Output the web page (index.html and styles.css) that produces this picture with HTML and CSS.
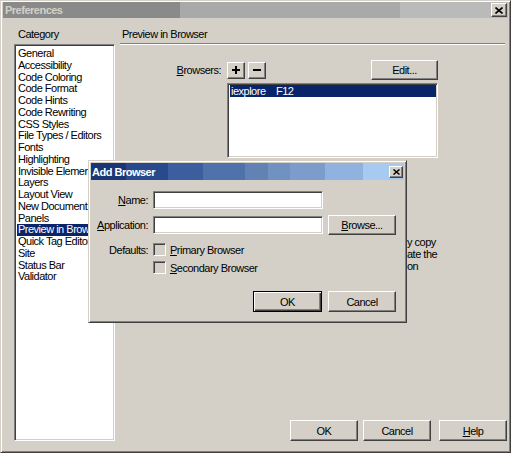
FILE: index.html
```html
<!DOCTYPE html>
<html>
<head>
<meta charset="utf-8">
<title>Preferences</title>
<link rel="stylesheet" href="styles.css">
</head>
<body>
<div class="window">
  <div class="titlebar">
    <span class="title">Preferences</span>
    <span class="tclose"><svg width="8" height="7" viewBox="0 0 8 7"><path d="M0.5 0.5L7.5 6.5M7.5 0.5L0.5 6.5" stroke="#000" stroke-width="1.6" fill="none"/></svg></span>
  </div>
  <div class="body">
    <div class="leftcol">
      <div class="caption">Category</div>
      <ul class="catlist">
        <li>General</li>
        <li>Accessibility</li>
        <li>Code Coloring</li>
        <li>Code Format</li>
        <li>Code Hints</li>
        <li>Code Rewriting</li>
        <li>CSS Styles</li>
        <li>File Types / Editors</li>
        <li>Fonts</li>
        <li>Highlighting</li>
        <li>Invisible Elements</li>
        <li>Layers</li>
        <li>Layout View</li>
        <li>New Document</li>
        <li>Panels</li>
        <li class="sel">Preview in Browser</li>
        <li>Quick Tag Editor</li>
        <li>Site</li>
        <li>Status Bar</li>
        <li>Validator</li>
      </ul>
    </div>
    <div class="rightcol">
      <div class="caption panelhead">Preview in Browser</div>
      <div class="browsers">
        <div class="blabel"><u>B</u>rowsers:</div>
        <div class="bctrl">
          <button class="btn sq"><svg width="8" height="8" viewBox="0 0 8 8"><path d="M4 0V8M0 4H8" stroke="#000" stroke-width="2"/></svg></button>
          <button class="btn sq"><svg width="8" height="8" viewBox="0 0 8 8"><path d="M0 4H8" stroke="#000" stroke-width="2"/></svg></button>
          <button class="btn edit">Edit...</button>
        </div>
        <div></div>
        <div class="blist">
          <div class="brow sel"><span class="bname">iexplore</span><span>F12</span></div>
        </div>
      </div>
      <div class="note">y copy<br>ate the<br>on</div>
      <div class="footer">
        <button class="btn fbtn">OK</button>
        <button class="btn fbtn">Cancel</button>
        <button class="btn fbtn help"><u>H</u>elp</button>
      </div>
    </div>
  </div>

  <div class="dialog">
    <div class="dtitle">
      <span class="title">Add Browser</span>
      <span class="dclose"><svg width="7" height="6" viewBox="0 0 7 6"><path d="M0.5 0.5L6.5 5.5M6.5 0.5L0.5 5.5" stroke="#000" stroke-width="1.5" fill="none"/></svg></span>
    </div>
    <div class="dbody">
      <div class="drow r1">
        <span class="dlabel"><u>N</u>ame:</span>
        <span class="field"></span>
      </div>
      <div class="drow r2">
        <span class="dlabel"><u>A</u>pplication:</span>
        <span class="field"></span>
        <button class="btn dbtn"><u>B</u>rowse...</button>
      </div>
      <div class="drow r3">
        <span class="dlabel">Defaults:</span>
        <span class="check"></span>
        <span class="ctext"><u>P</u>rimary Browser</span>
      </div>
      <div class="drow r4">
        <span class="dlabel"></span>
        <span class="check"></span>
        <span class="ctext"><u>S</u>econdary Browser</span>
      </div>
      <div class="dbuttons">
        <button class="btn dbtn def">OK</button>
        <button class="btn dbtn">Cancel</button>
      </div>
    </div>
  </div>
</div>
</body>
</html>
```

FILE: styles.css
```css
html, body {
  margin: 0;
  padding: 0;
  background: #d4d0c8;
}
body {
  font-family: "Liberation Sans", Arial, sans-serif;
  font-size: 11px;
  letter-spacing: -0.5px;
  color: #000;
}
* { box-sizing: border-box; }

.window {
  position: relative;
  width: 511px;
  height: 453px;
  border: 1px solid;
  border-color: #d4d0c8 #404040 #404040 #d4d0c8;
  box-shadow: inset 1px 1px #ffffff, inset -1px -1px #808080;
  padding: 1px 2px 1px 2px;
  display: flex;
  flex-direction: column;
  overflow: hidden;
}

.titlebar {
  height: 16px;
  display: flex;
  align-items: center;
  justify-content: space-between;
  background: linear-gradient(to right, #8a8a8a 0, #8a8a8a 177px, #a9a9a9 177px, #a9a9a9 397px, #bababa 397px);
}
.titlebar .title {
  color: #d4d0c8;
  font-weight: bold;
  padding-left: 2px;
  line-height: 16px;
}
.tclose, .dclose {
  display: flex;
  align-items: center;
  justify-content: center;
  background: #d4d0c8;
  border: 1px solid;
  border-color: #ffffff #404040 #404040 #ffffff;
  box-shadow: inset -1px -1px #808080;
}
.tclose {
  width: 16px;
  height: 14px;
  margin-right: 1px;
}

.body {
  display: flex;
  height: 433px;
  padding: 10px 1px 10px 11px;
  gap: 5px;
}

.caption {
  height: 12px;
  line-height: 12px;
  white-space: nowrap;
}

.leftcol {
  width: 101px;
  display: flex;
  flex-direction: column;
}
.leftcol .caption {
  padding-left: 4px;
  margin-bottom: 4px;
}
.catlist {
  list-style: none;
  margin: 0;
  padding: 3px 0 0 1px;
  flex: 1;
  background: #ffffff;
  border: 1px solid;
  border-color: #808080 #ffffff #ffffff #808080;
  box-shadow: inset 1px 1px #404040, inset -1px -1px #d4d0c8;
  overflow: hidden;
}
.catlist li {
  height: 11.75px;
  line-height: 11.75px;
  white-space: nowrap;
  padding-left: 1px;
  margin-left: 1px;
}
.catlist li.sel {
  background: #0a246a;
  color: #ffffff;
}

.rightcol {
  flex: 1;
  display: flex;
  flex-direction: column;
}
.panelhead {
  height: 17px;
  padding-left: 2px;
  margin-right: 2px;
  border-bottom: 1px solid #ffffff;
  box-shadow: inset 0 -1px #808080;
}

.browsers {
  margin-top: 15px;
  display: grid;
  grid-template-columns: 107px 211px;
  grid-template-rows: 20px 75px;
  row-gap: 3px;
}
.blabel {
  text-align: right;
  padding-right: 6px;
  line-height: 20px;
}
.bctrl {
  display: flex;
  align-items: center;
  gap: 3px;
}

.btn {
  font: inherit;
  letter-spacing: inherit;
  color: #000;
  background: #d4d0c8;
  border: 1px solid;
  border-color: #ffffff #404040 #404040 #ffffff;
  box-shadow: inset -1px -1px #808080;
  padding: 0;
  margin: 0;
  display: flex;
  align-items: center;
  justify-content: center;
}
.sq {
  width: 18px;
  height: 17px;
}
.edit {
  width: 67px;
  height: 20px;
  margin-left: auto;
}

.blist {
  background: #ffffff;
  border: 1px solid;
  border-color: #808080 #ffffff #ffffff #808080;
  box-shadow: inset 1px 1px #404040, inset -1px -1px #d4d0c8;
  padding: 1px 1px 0 2px;
}
.brow {
  height: 12px;
  line-height: 12px;
  display: flex;
  padding-left: 1px;
}
.brow.sel {
  background: #0a246a;
  color: #ffffff;
}
.bname {
  width: 45px;
}

.note {
  margin-top: 78px;
  margin-left: 287px;
  line-height: 12px;
  white-space: nowrap;
}

.footer {
  margin-top: auto;
  display: flex;
  justify-content: flex-end;
  gap: 5px;
}
.fbtn {
  width: 68px;
  height: 21px;
}
.fbtn.help {
  margin-left: 3px;
}

/* Dialog overlay */
.dialog {
  position: absolute;
  left: 87px;
  top: 159px;
  width: 319px;
  height: 163px;
  background: #d4d0c8;
  border: 1px solid;
  border-color: #d4d0c8 #404040 #404040 #d4d0c8;
  box-shadow: inset 1px 1px #ffffff, inset -1px -1px #808080;
  padding: 2px;
}
.dtitle {
  height: 17px;
  display: flex;
  align-items: center;
  justify-content: space-between;
  background: linear-gradient(to right,
    #1a3673 0, #1a3673 35px,
    #284a8c 35px, #284a8c 77px,
    #3c5e9e 77px, #3c5e9e 112px,
    #5072aa 112px, #5072aa 154px,
    #6282b4 154px, #6282b4 177px,
    #7092c2 177px, #7092c2 199px,
    #7c9ccc 199px, #7c9ccc 234px,
    #90b2de 234px, #90b2de 272px,
    #a6caf0 272px);
}
.dtitle .title {
  color: #ffffff;
  font-weight: bold;
  padding-left: 1px;
}
.dclose {
  width: 14px;
  height: 12px;
  margin-right: 1px;
}

.dbody {
  display: flex;
  flex-direction: column;
}
.drow {
  display: flex;
  align-items: center;
}
.r1 { margin-top: 11px; height: 18px; }
.r2 { margin-top: 6px; height: 20px; }
.r3 { margin-top: 8px; height: 13px; }
.r4 { margin-top: 5px; height: 13px; }
.dlabel {
  width: 57px;
  margin-right: 5px;
  text-align: right;
  white-space: nowrap;
}
.field {
  width: 170px;
  height: 18px;
  background: #ffffff;
  border: 1px solid;
  border-color: #808080 #ffffff #ffffff #808080;
  box-shadow: inset 1px 1px #404040, inset -1px -1px #d4d0c8;
  margin-right: 5px;
}
.dbtn {
  width: 68px;
  height: 20px;
}
.check {
  width: 13px;
  height: 13px;
  background: #d4d0c8;
  border: 1px solid;
  border-color: #808080 #ffffff #ffffff #808080;
  box-shadow: inset 1px 1px #404040, inset -1px -1px #d4d0c8;
  margin-right: 4px;
}
.ctext {
  white-space: nowrap;
}
.dbuttons {
  margin-top: 17px;
  display: flex;
  justify-content: flex-end;
  gap: 6px;
  padding-right: 8px;
}
.dbuttons .dbtn {
  height: 21px;
}
.dbtn.def {
  width: 69px;
  border: 1px solid #000000;
  box-shadow: inset 1px 1px #ffffff, inset -1px -1px #404040, inset -2px -2px #808080;
}
```
